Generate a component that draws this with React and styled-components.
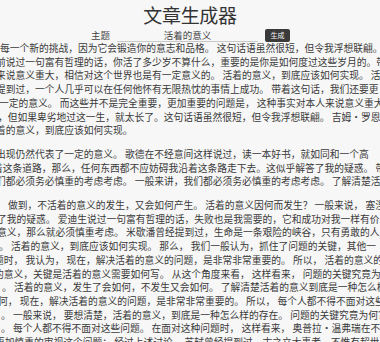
import React, { useState } from 'react'
import styled, { createGlobalStyle } from 'styled-components'

const GlobalStyle = createGlobalStyle`
    html, body {
        margin: 0;
        padding: 0;
        background: #f7f7f7;
        overflow: hidden;
    }
    body {
        font-family: "Noto Sans CJK SC", "Noto Sans", sans-serif;
        color: #3a3a3a;
    }
`

const paragraphs = [
    [
        [0, '每一个新的挑战，因为它会锻造你的意志和品格。 这句话语虽然很短，但令我浮想联翩。'],
        [-4, '前说过一句富有哲理的话，你活了多少岁不算什么，重要的是你是如何度过这些岁月的。带'],
        [-4, '来说意义重大，相信对这个世界也是有一定意义的。 活着的意义，到底应该如何实现。 活'],
        [-4, '提到过，一个人几乎可以在任何他怀有无限热忱的事情上成功。 带着这句话，我们还要更'],
        [-1, '一定的意义。 而这些并不是完全重要，更加重要的问题是， 这种事实对本人来说意义重大'],
        [-2, '，但如果卑劣地过这一生，就太长了。这句话语虽然很短，但令我浮想联翩。 吉姆·罗恩曾'],
        [-4, '着的意义，到底应该如何实现。'],
    ],
    [
        [-4, '出现仍然代表了一定的意义。 歌德在不经意间这样说过，读一本好书，就如同和一个高'],
        [-7, '着这条道路，那么，任何东西都不应妨碍我沿着这条路走下去。这似乎解答了我的疑惑。 带'],
        [-4, '们都必须务必慎重的考虑考虑。 一般来讲，我们都必须务必慎重的考虑考虑。 了解清楚活'],
    ],
    [
        [8, '做到，不活着的意义的发生，又会如何产生。 活着的意义因何而发生？ 一般来说， 塞涅'],
        [-3, '了我的疑惑。 爱迪生说过一句富有哲理的话，失败也是我需要的，它和成功对我一样有价'],
        [-3, '意义，那么就必须慎重考虑。 米歇潘曾经提到过，生命是一条艰险的峡谷，只有勇敢的人'],
        [-1, '。 活着的意义，到底应该如何实现。 那么， 我们一般认为，抓住了问题的关键，其他一'],
        [-6, '题时， 我认为， 现在，解决活着的意义的问题，是非常非常重要的。 所以， 活着的意义的'],
        [-6, '的意义，关键是活着的意义需要如何写。 从这个角度来看， 这样看来， 问题的关键究竟为'],
        [2, '。 活着的意义，发生了会如何，不发生又会如何。 了解清楚活着的意义到底是一种怎么样'],
        [-2, '何， 现在，解决活着的意义的问题，是非常非常重要的。 所以， 每个人都不得不面对这些'],
        [1, '。 一般来说， 要想清楚，活着的意义，到底是一种怎么样的存在。 问题的关键究竟为何？'],
        [1, '。 每个人都不得不面对这些问题。 在面对这种问题时， 这样看来， 奥普拉·温弗瑞在不经'],
        [-5, '更加慎重的审视这个问题： 经过上述讨论， 苏轼曾经提到过，古之立大事者，不惟有超世'],
    ],
]

function App() {
    const [topic, setTopic] = useState('活着的意义')

    return (
        <Page>
            <GlobalStyle />
            <Title>文章生成器</Title>
            <Form>
                <Label>主题</Label>
                <TopicInput value={topic} onChange={(e) => setTopic(e.target.value)} />
                <GenerateButton>生成</GenerateButton>
            </Form>
            <Article>
                {paragraphs.map((lines, i) => (
                    <Paragraph key={i}>
                        {lines.map(([x, text], j) => (
                            <Line key={j} $x={x}>{text}</Line>
                        ))}
                    </Paragraph>
                ))}
            </Article>
        </Page>
    )
}

const Page = styled.div`
    display: flex;
    flex-direction: column;
    align-items: center;
    width: 380px;
    height: 342px;
    overflow: hidden;
`

const Title = styled.h1`
    margin: 4px 0 0;
    font-size: 19px;
    line-height: 22px;
    font-weight: 400;
    color: #333;
    letter-spacing: -0.3px;
`

const Form = styled.div`
    display: flex;
    align-items: center;
    height: 11px;
    margin-top: 4px;
    width: 200px;
    padding-left: 2px;
`

const Label = styled.span`
    font-size: 9.5px;
    line-height: 11px;
    color: #444;
    width: 26px;
`

const TopicInput = styled.input`
    width: 141px;
    height: 11px;
    padding: 0;
    border: none;
    border-bottom: 1.5px solid #c9c9c9;
    background: transparent;
    font-family: "Noto Sans CJK SC", sans-serif;
    font-size: 9.5px;
    line-height: 11px;
    color: #444;
    text-align: center;
    outline: none;
`

const GenerateButton = styled.button`
    margin-left: 7px;
    width: 25px;
    height: 13px;
    padding: 0;
    border: none;
    border-radius: 2px;
    background: #3a3a3a;
    color: #f2f2f2;
    font-family: "Noto Sans CJK SC", sans-serif;
    font-size: 7px;
    line-height: 13px;
`

const Article = styled.div`
    width: 400px;
    flex-shrink: 0;
    margin-top: 1px;
`

const Paragraph = styled.div`
    margin-bottom: 10px;
`

const Line = styled.div`
    white-space: pre;
    font-size: 9.75px;
    line-height: 13.7px;
    padding-left: ${(p) => p.$x + 10}px;
    color: #3a3a3a;
`

export default App
